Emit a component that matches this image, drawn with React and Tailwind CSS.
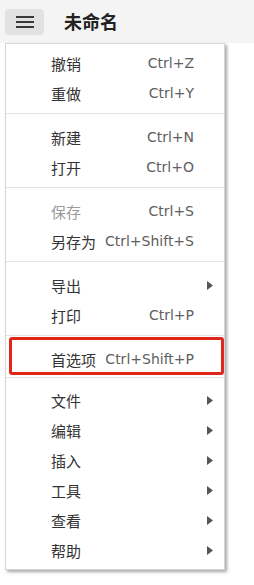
import { Fragment } from 'react';

const groups = [
  [
    { label: '撤销', key: 'Ctrl+Z' },
    { label: '重做', key: 'Ctrl+Y' },
  ],
  [
    { label: '新建', key: 'Ctrl+N' },
    { label: '打开', key: 'Ctrl+O' },
  ],
  [
    { label: '保存', key: 'Ctrl+S', disabled: true },
    { label: '另存为', key: 'Ctrl+Shift+S' },
  ],
  [
    { label: '导出', sub: true },
    { label: '打印', key: 'Ctrl+P' },
  ],
  [{ label: '首选项', key: 'Ctrl+Shift+P', marked: true }],
  [
    { label: '文件', sub: true },
    { label: '编辑', sub: true },
    { label: '插入', sub: true },
    { label: '工具', sub: true },
    { label: '查看', sub: true },
    { label: '帮助', sub: true },
  ],
];

function Arrow() {
  return (
    <svg width="6" height="9" viewBox="0 0 6 9" className="text-[#555]">
      <polygon points="0,0 6,4.5 0,9" fill="currentColor" />
    </svg>
  );
}

function Row({ item }) {
  return (
    <div className="relative flex h-[30px] items-center pl-[45px] pr-[10px]">
      {/* red highlight box around the row */}
      {item.marked && (
        <div className="pointer-events-none absolute -top-[7px] -bottom-[1px] left-[3px] right-0 rounded-[3px] border-[3px] border-[#e0261b]" />
      )}
      <span
        className={`text-[15px] leading-none ${item.disabled ? 'text-[#9a9a9a]' : 'text-[#333]'}`}
        style={{ fontFamily: '"Noto Sans CJK SC", "Noto Sans", sans-serif' }}
      >
        {item.label}
      </span>
      <span
        className="ml-auto text-[14px] leading-none text-[#606060]"
        style={{ fontFamily: '"DejaVu Sans", sans-serif' }}
      >
        {item.key}
      </span>
      <span className="flex w-[20px] justify-end pr-[1px]">{item.sub && <Arrow />}</span>
    </div>
  );
}

export default function App() {
  return (
    <div className="relative h-[585px] w-[254px] overflow-hidden bg-white">
      <div className="flex h-[43px] items-center bg-[#f4f4f4] pl-[5px]">
        <button className="flex h-[26px] w-[39px] flex-col items-center justify-center gap-[3px] rounded-[4px] bg-[#e2e2e2]">
          <span className="h-[2px] w-[18px] bg-[#3a3a3a]" />
          <span className="h-[2px] w-[18px] bg-[#3a3a3a]" />
          <span className="h-[2px] w-[18px] bg-[#3a3a3a]" />
        </button>
        <span
          className="ml-[20px] text-[18px] font-bold text-[#222]"
          style={{ fontFamily: '"Noto Sans CJK SC", "Noto Sans", sans-serif' }}
        >
          未命名
        </span>
      </div>

      <div className="absolute left-[5px] top-[43px] w-[220px] border border-[#d6d6d6] bg-white pt-[4px] pb-[4px] shadow-[2px_2px_3px_rgba(0,0,0,0.35)]">
        {groups.map((g, gi) => (
          <Fragment key={gi}>
            {gi > 0 && (
              <div className={`${gi === 5 ? 'mt-[3px] mb-[7px]' : 'mt-[5px] mb-[8px]'} h-px bg-[#e4e4e4]`} />
            )}
            {g.map((item) => (
              <Row key={item.label} item={item} />
            ))}
          </Fragment>
        ))}
      </div>
    </div>
  );
}
